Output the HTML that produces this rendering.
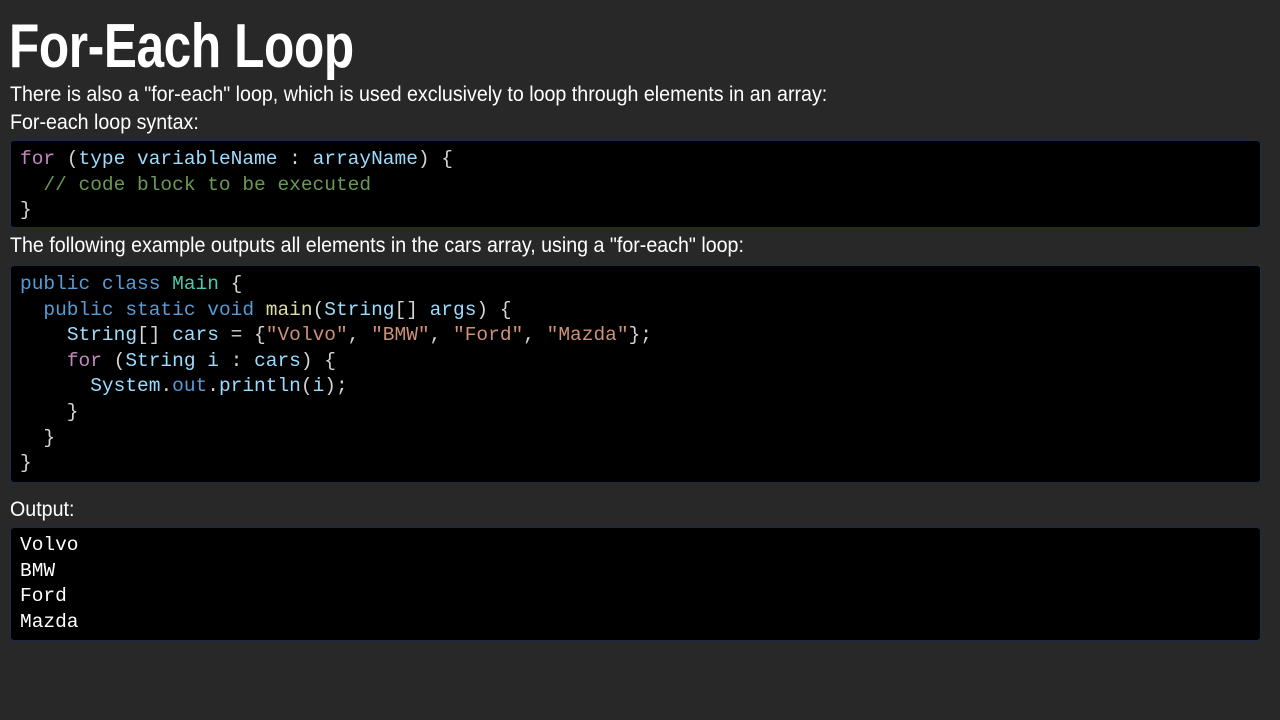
<!DOCTYPE html>
<html><head><meta charset="utf-8"><style>
body{margin:0;background:#282828;width:1280px;height:720px;overflow:hidden;position:relative;font-family:"Liberation Sans",sans-serif;color:#fff}
.t{position:absolute;left:10px;white-space:pre;transform-origin:0 0;transform:scaleX(0.935)}
h1{position:absolute;left:9px;top:12px;margin:0;font-size:62px;font-weight:bold;letter-spacing:-0.5px;line-height:70px;white-space:pre;transform-origin:0 0;transform:scaleX(0.8)}
.p{font-size:21px;line-height:24px}
.box{position:absolute;left:10px;width:1251px;background:#000;border:1px solid #1b2b4a;border-radius:4px;box-sizing:border-box}
pre{margin:0;position:absolute;left:9px;font-family:"Liberation Mono",monospace;font-size:19.5px;line-height:25.6px;color:#d4d4d4}
.k{color:#c586c0}.v{color:#9cdcfe}.c{color:#6a9955}.b{color:#569cd6}.g{color:#4ec9b0}.f{color:#dcdcaa}.s{color:#ce9178}
</style></head><body>
<h1>For-Each Loop</h1>
<div class="t p" style="top:83px">There is also a "for-each" loop, which is used exclusively to loop through elements in an array:</div>
<div class="t p" style="top:111px">For-each loop syntax:</div>
<div class="box" style="top:140px;height:88px"><pre style="top:6px"><span class="k">for</span> (<span class="v">type</span> <span class="v">variableName</span> : <span class="v">arrayName</span>) {
  <span class="c">// code block to be executed</span>
}</pre></div>
<div class="t p" style="top:234px">The following example outputs all elements in the cars array, using a "for-each" loop:</div>
<div class="box" style="top:265px;height:218px"><pre style="top:6px"><span class="b">public</span> <span class="b">class</span> <span class="g">Main</span> {
  <span class="b">public</span> <span class="b">static</span> <span class="b">void</span> <span class="f">main</span>(<span class="v">String</span>[] <span class="v">args</span>) {
    <span class="v">String</span>[] <span class="v">cars</span> = {<span class="s">"Volvo"</span>, <span class="s">"BMW"</span>, <span class="s">"Ford"</span>, <span class="s">"Mazda"</span>};
    <span class="k">for</span> (<span class="v">String</span> <span class="v">i</span> : <span class="v">cars</span>) {
      <span class="v">System</span>.<span class="b">out</span>.<span class="v">println</span>(<span class="v">i</span>);
    }
  }
}</pre></div>
<div class="t p" style="top:498px">Output:</div>
<div class="box" style="top:527px;height:114px"><pre style="top:5px;color:#fff">Volvo
BMW
Ford
Mazda</pre></div>
</body></html>
